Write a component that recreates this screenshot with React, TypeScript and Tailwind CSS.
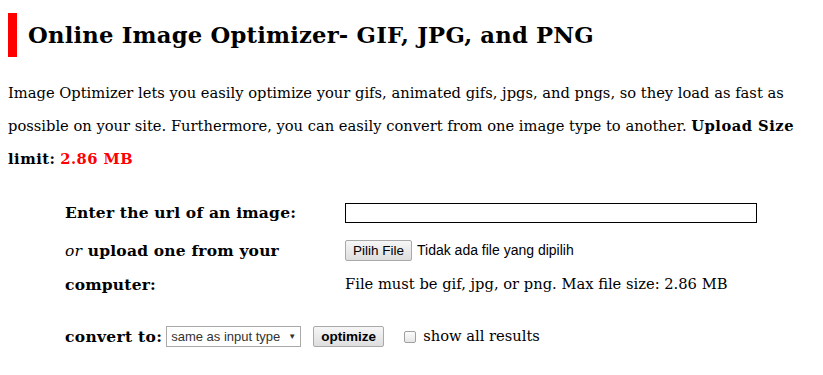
import React from 'react';

// Страница «Online Image Optimizer» — заголовок, описание и форма загрузки

const serif = "font-['DejaVu_Serif','Liberation_Serif',serif]";
const sans = "font-['Liberation_Sans',Arial,sans-serif]";

export default function App() {
  return (
    <div className={`min-h-[375px] w-[823px] bg-white text-black ${serif}`}>
      {/* Заголовок с красной полоской */}
      <div className="flex items-center pl-2 pt-[13px]">
        <div className="h-[44px] w-[9px] bg-[#ff0000]" />
        <h1 className="ml-[11px] text-[22.7px] font-bold leading-none tracking-[0.2px]">
          Online Image Optimizer- GIF, JPG, and PNG
        </h1>
      </div>

      {/* Описание */}
      <p className="mt-[19px] w-[810px] pl-2 text-[14.7px] leading-[33px]">
        Image Optimizer lets you easily optimize your gifs, animated gifs, jpgs, and pngs, so they load as fast as
        possible on your site. Furthermore, you can easily convert from one image type to another.{' '}
        <b className="tracking-[0.5px]">Upload Size</b> <b className="tracking-[0.5px]">limit:</b>{' '}
        <b className="tracking-[0.5px] text-[#ff0000]">2.86 MB</b>
      </p>

      {/* Форма */}
      <div className="mt-[19px] pl-[65px] text-[14.7px]">
        <div className="flex h-[38px] items-center">
          <div className="w-[280px] text-[15.5px] font-bold tracking-[0.2px]">Enter the url of an image:</div>
          <input type="text" className="h-[20px] w-[412px] border border-black bg-white outline-none" />
        </div>

        <div className="mt-[2px] flex leading-[33px]">
          <div className="w-[280px] text-[15.5px] font-bold tracking-[0.2px]">
            <i className="font-normal">or</i> upload one from your
            <br />
            <span>computer:</span>
          </div>
          <div>
            <div className="flex h-[33px] items-center">
              <button
                type="button"
                className={`h-[21px] rounded-[2px] border border-[#a9a9a9] bg-gradient-to-b from-[#f6f6f6] to-[#dedede] px-[7px] text-[13.5px] leading-none ${sans}`}
              >
                Pilih File
              </button>
              <span className={`ml-[5px] text-[14px] ${sans}`}>Tidak ada file yang dipilih</span>
            </div>
            <div>File must be gif, jpg, or png. Max file size: 2.86 MB</div>
          </div>
        </div>

        <div className="mt-[19px] flex h-[33px] items-center">
          <span className="text-[15.5px] font-bold tracking-[0.3px]">convert to:</span>
          <div
            className={`ml-[4px] flex h-[21px] w-[135px] items-center justify-between border border-[#a9a9a9] bg-white px-[4px] text-[13px] text-[#333] ${sans}`}
          >
            <span>same as input type</span>
            <span className="text-[8px]">▼</span>
          </div>
          <button
            type="button"
            className={`ml-[12px] h-[21px] w-[71px] rounded-[2px] border border-[#a9a9a9] bg-gradient-to-b from-[#f6f6f6] to-[#dedede] text-[13.5px] font-bold leading-none ${sans}`}
          >
            optimize
          </button>
          <span className="ml-[20px] h-[12px] w-[12px] rounded-[2px] border border-[#a0a0a0] bg-gradient-to-b from-[#fcfcfc] to-[#e6e6e6]" />
          <span className="ml-[7px]">show all results</span>
        </div>
      </div>
    </div>
  );
}
